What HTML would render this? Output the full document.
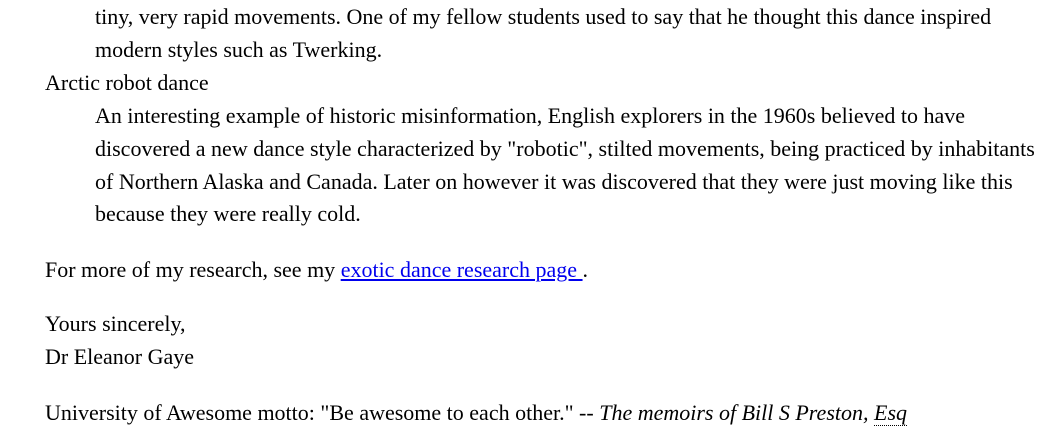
<!DOCTYPE html>
<html><head><meta charset="utf-8"><style>
html,body{margin:0;padding:0;background:#fff;}
body{width:1063px;height:437px;overflow:hidden;position:relative;font-family:"Liberation Serif",serif;font-size:22px;color:#000;}
.l{position:absolute;white-space:nowrap;line-height:33px;}
a{color:#0000ee;text-decoration:underline;}
abbr{text-decoration:none;border-bottom:1px dotted #000;}
</style></head><body>
<div class="l" style="left:95px;top:0px">tiny, very rapid movements. One of my fellow students used to say that he thought this dance inspired</div>
<div class="l" style="left:95px;top:33px">modern styles such as Twerking.</div>
<div class="l" style="left:45px;top:66px">Arctic robot dance</div>
<div class="l" style="left:95px;top:99px">An interesting example of historic misinformation, English explorers in the 1960s believed to have</div>
<div class="l" style="left:95px;top:132px">discovered a new dance style characterized by "robotic", stilted movements, being practiced by inhabitants</div>
<div class="l" style="left:95px;top:165px">of Northern Alaska and Canada. Later on however it was discovered that they were just moving like this</div>
<div class="l" style="left:95px;top:197px">because they were really cold.</div>
<div class="l" style="left:45px;top:253px">For more of my research, see my <a>exotic dance research page </a>.</div>
<div class="l" style="left:45px;top:307px">Yours sincerely,</div>
<div class="l" style="left:45px;top:340px">Dr Eleanor Gaye</div>
<div class="l" style="left:45px;top:396px">University of Awesome motto: "Be awesome to each other." -- <i>The memoirs of Bill S Preston, <abbr>Esq</abbr></i></div>
</body></html>
